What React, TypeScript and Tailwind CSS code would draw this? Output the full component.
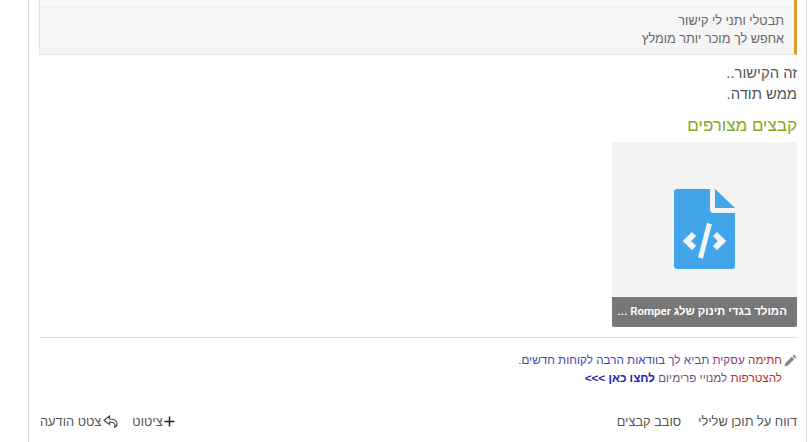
import React from 'react';

function FileCodeIcon() {
  return (
    <svg width="61" height="80" viewBox="0 0 61 80">
      <path d="M3 0H36V20a4 4 0 0 0 4 4H61V77a3 3 0 0 1-3 3H3a3 3 0 0 1-3-3V3a3 3 0 0 1 3-3Z" fill="#42a5ea" />
      <path d="M41 0L61 19H41Z" fill="#42a5ea" />
      <g fill="none" stroke="#f4f4f4" strokeWidth="6">
        <path d="M20 45L13 52L20 59" />
        <path d="M41 45L48 52L41 59" />
      </g>
      <path d="M35.5 34.5L26.5 69" fill="none" stroke="#f4f4f4" strokeWidth="5" />
    </svg>
  );
}

export default function App() {
  return (
    <div dir="rtl" className="h-[442px] w-[810px] overflow-hidden bg-white font-['Liberation_Sans',sans-serif] text-[#555]">
      <div className="ml-[28px] mr-[3px] h-full border-x border-[#d8d8d8] pl-[10px] pr-[9px]">
        <div className="h-[55px] border-b border-l border-[#e4e4e4] border-r-[3px] border-r-[#e29a2e] bg-[#f5f5f5] text-[12.7px] leading-[18px] text-[#666]">
          <div className="h-[6px] bg-[#fafafa]" />
          <div className="pr-[10px] pt-[6px]">
            <p>תבטלי ותני לי קישור</p>
            <p>אחפש לך מוכר יותר מומלץ</p>
          </div>
        </div>
        <div className="pt-[8px] text-[14.8px] leading-[21px] text-[#555]">
          <p>זה הקישור..</p>
          <p>ממש תודה.</p>
        </div>
        <h3 className="mt-[9px] text-[17px] leading-[24px] font-normal text-[#87a81c]">קבצים מצורפים</h3>
        <div className="mt-[4px] flex h-[185px] w-[185px] flex-col overflow-hidden rounded-[2px] bg-[#f4f4f4]">
          <div className="flex flex-1 items-start justify-center pt-[47px]">
            <FileCodeIcon />
          </div>
          <div className="flex h-[30px] items-center bg-[#777] px-[10px] font-['Roboto','Liberation_Sans',sans-serif] text-[11.5px] font-semibold whitespace-nowrap text-white">
            <span>המולד בגדי תינוק שלג Romper ...</span>
          </div>
        </div>
        <div className="mt-[10px] border-t border-[#dedede] pt-[13px] text-[11.7px] leading-[18px]">
          <div className="flex items-start gap-[2px]">
            <svg width="13" height="13" viewBox="0 0 13 13" className="mt-[3px] shrink-0" fill="#888">
              <path d="M10 .5l2.5 2.5-1.4 1.4-2.5-2.5zM7.8 2.7l2.5 2.5-6.4 6.4-3.4.9.9-3.4z" />
            </svg>
            <div>
              <p className="text-[#4444bb]">
                <span className="text-[#b03030]">חתימה </span>
                <span className="text-[#8a3a80]">עסקית </span>
                <span className="text-[#55559a]">תביא לך </span>
                בוודאות הרבה לקוחות חדשים.
              </p>
              <p>
                <span className="text-[#b03030]">להצטרפות </span>
                <span className="text-[#7a4a80]">למנויי פרימיום </span>
                <span className="font-bold text-[#2222bb]">לחצו כאן &gt;&gt;&gt;</span>
              </p>
            </div>
          </div>
        </div>
        <div className="mt-[25px] flex items-center justify-between text-[12.8px] text-[#555]">
          <div className="flex gap-[17px]">
            <span>דווח על תוכן שלילי</span>
            <span>סובב קבצים</span>
          </div>
          <div className="flex items-center gap-[14px] pl-px">
            <span className="flex items-center gap-[1px]">
              <svg width="11" height="11" viewBox="0 0 11 11" stroke="#222" strokeWidth="1.5">
                <path d="M5.500 .5v10M.5 5.500h10" />
              </svg>
              ציטוט
            </span>
            <span className="flex items-center gap-[2px]">
              <svg width="15" height="13" viewBox="0 0 15 13" fill="none" stroke="#444" strokeWidth="1.1">
                <path d="M6.5 1 1 5.500 6.500 9.500V7c3 0 5 .8 5.500 3 .3 1-.3 1.800-1 2.300 2-.4 3.200-2 3-4C13.700 5.500 10.500 4 6.500 4Z" />
              </svg>
              צטט הודעה
            </span>
          </div>
        </div>
      </div>
    </div>
  );
}
